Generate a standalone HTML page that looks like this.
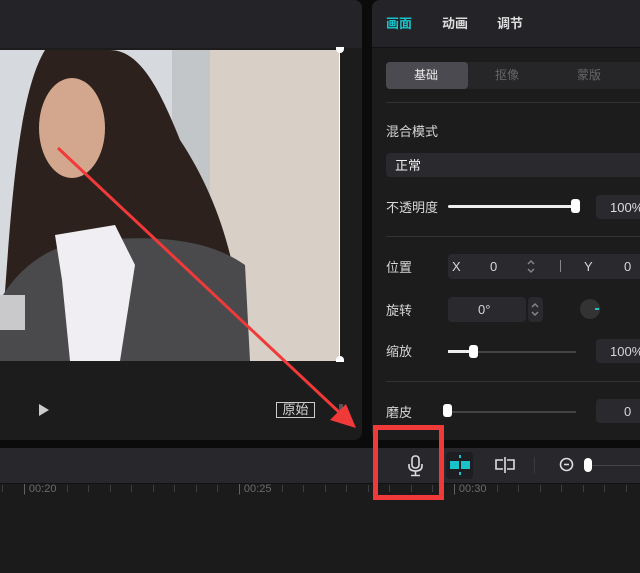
<!DOCTYPE html>
<html><head><meta charset="utf-8"><style>
*{margin:0;padding:0;box-sizing:border-box}
body{width:640px;height:573px;background:#0b0b0c;position:relative;overflow:hidden;font-family:"Liberation Sans","Noto Sans CJK SC",sans-serif;color:#ddd;line-height:1}
.abs{position:absolute}
.lp{left:-10px;top:0;width:372px;height:440px;background:#1c1c1d;border-radius:8px;overflow:hidden}
.rp{left:372px;top:0;width:280px;height:440px;background:#1c1c1d;border-radius:8px;overflow:hidden}
.t{font-size:13px;color:#d6d6d6;line-height:1}
.box{background:#2a2a2e;border-radius:4px}
.line{height:1px;background:#333}
.tick{position:absolute;top:485px;width:1px;height:7px;background:#3e3e42}
.lab{position:absolute;top:484px;font-size:11px;color:#6a6a6e}
</style></head><body>
<div class="abs lp">
  <div class="abs" style="left:0;top:0;width:372px;height:48px;background:#232328"></div>
</div>
<svg class="abs" style="left:0;top:50px" width="340" height="311" viewBox="0 0 340 311">
  <rect width="340" height="311" fill="#d8d4d0"/>
  <rect x="0" y="0" width="175" height="311" fill="#d6d9de"/>
  <rect x="172" y="0" width="38" height="190" fill="#c3c6c9"/>
  <rect x="210" y="0" width="130" height="311" fill="#d8cfc6"/>
  <path d="M45 0 C15 50 10 180 0 311 L240 311 C245 230 220 150 180 90 C160 40 140 0 110 0Z" fill="#2c211d"/>
  <path d="M0 250 C20 215 55 190 100 190 C160 185 210 190 245 215 L250 311 L0 311Z" fill="#4a494c"/>
  <path d="M55 185 L115 175 L135 215 L120 311 L70 311 L62 230Z" fill="#f0eef2"/>
  <ellipse cx="72" cy="78" rx="33" ry="50" fill="#d3a68e"/>
  <path d="M55 15 C95 5 120 50 118 100 L100 35Z" fill="#2c211d"/>
  <rect x="0" y="245" width="25" height="35" fill="#c9c9cc"/>
</svg>
<div class="abs" style="left:336px;top:47px;width:8px;height:6px;background:#fff;border-radius:0 0 4px 4px"></div>
<div class="abs" style="left:336px;top:356px;width:8px;height:6px;background:#fff;border-radius:4px 4px 0 0"></div>
<div class="abs" style="left:339px;top:50px;width:1px;height:311px;background:#fff"></div>
<svg class="abs" style="left:38px;top:403px" width="12" height="14"><path d="M1 1 L11 7 L1 13Z" fill="#ccc"/></svg>
<div class="abs t" style="left:276px;top:402px;width:39px;height:16px;border:1px solid #ccc;font-size:13px;line-height:14px;text-align:center">原始</div>
<div class="abs" style="left:339px;top:404px;width:4px;height:6px;background:#555"></div>

<div class="abs rp">
  <div class="abs" style="left:0;top:0;width:280px;height:48px;background:#232328;border-bottom:1px solid #111"></div>
  <div class="abs" style="left:14px;top:17px;font-size:13px;color:#19c1c8;font-weight:bold">画面</div>
  <div class="abs" style="left:70px;top:17px;font-size:13px;color:#ddd;font-weight:bold">动画</div>
  <div class="abs" style="left:125px;top:17px;font-size:13px;color:#ddd;font-weight:bold">调节</div>
  <div class="abs box" style="left:14px;top:62px;width:270px;height:27px;background:#262629"></div>
  <div class="abs" style="left:14px;top:62px;width:82px;height:27px;background:#4a4a50;border-radius:4px"></div>
  <div class="abs" style="left:42px;top:69px;font-size:12px;color:#eee">基础</div>
  <div class="abs" style="left:123px;top:69px;font-size:12px;color:#666">抠像</div>
  <div class="abs" style="left:205px;top:69px;font-size:12px;color:#666">蒙版</div>
  <div class="abs line" style="left:14px;top:102px;width:270px"></div>
  <div class="abs t" style="left:14px;top:125px">混合模式</div>
  <div class="abs box" style="left:14px;top:153px;width:270px;height:24px"></div>
  <div class="abs t" style="left:23px;top:159px;color:#eee">正常</div>
  <div class="abs t" style="left:14px;top:201px">不透明度</div>
  <div class="abs" style="left:76px;top:205px;width:128px;height:3px;background:#eee;border-radius:2px"></div>
  <div class="abs" style="left:199px;top:199px;width:9px;height:14px;background:#fff;border-radius:3px"></div>
  <div class="abs box" style="left:224px;top:195px;width:60px;height:24px"></div>
  <div class="abs t" style="left:238px;top:201px;color:#ddd">100%</div>
  <div class="abs line" style="left:14px;top:236px;width:270px"></div>
  <div class="abs t" style="left:14px;top:261px">位置</div>
  <div class="abs box" style="left:76px;top:254px;width:208px;height:25px"></div>
  <div class="abs t" style="left:80px;top:260px">X</div>
  <div class="abs t" style="left:118px;top:260px">0</div>
  <svg class="abs" style="left:154px;top:259px" width="10" height="15"><path d="M2 5 L5 2 L8 5 M2 10 L5 13 L8 10" fill="none" stroke="#888" stroke-width="1.4"/></svg>
  <div class="abs" style="left:188px;top:260px;width:1px;height:12px;background:#888"></div>
  <div class="abs t" style="left:212px;top:260px">Y</div>
  <div class="abs t" style="left:252px;top:260px">0</div>
  <div class="abs t" style="left:14px;top:304px">旋转</div>
  <div class="abs box" style="left:76px;top:297px;width:78px;height:25px"></div>
  <div class="abs t" style="left:106px;top:303px">0°</div>
  <div class="abs box" style="left:156px;top:297px;width:15px;height:25px"></div>
  <svg class="abs" style="left:158px;top:302px" width="10" height="15"><path d="M2 5 L5 2 L8 5 M2 10 L5 13 L8 10" fill="none" stroke="#888" stroke-width="1.4"/></svg>
  <div class="abs" style="left:208px;top:299px;width:20px;height:20px;border-radius:50%;background:#333"></div>
  <div class="abs" style="left:223px;top:308px;width:4px;height:2px;background:#19c1c8"></div>
  <div class="abs t" style="left:14px;top:345px">缩放</div>
  <div class="abs" style="left:76px;top:351px;width:128px;height:2px;background:#444"></div>
  <div class="abs" style="left:76px;top:350px;width:26px;height:3px;background:#eee"></div>
  <div class="abs" style="left:97px;top:345px;width:9px;height:13px;background:#fff;border-radius:3px"></div>
  <div class="abs box" style="left:224px;top:339px;width:60px;height:24px"></div>
  <div class="abs t" style="left:238px;top:345px">100%</div>
  <div class="abs line" style="left:14px;top:381px;width:270px"></div>
  <div class="abs t" style="left:14px;top:406px">磨皮</div>
  <div class="abs" style="left:76px;top:411px;width:128px;height:2px;background:#444"></div>
  <div class="abs" style="left:71px;top:404px;width:9px;height:13px;background:#fff;border-radius:3px"></div>
  <div class="abs box" style="left:224px;top:399px;width:60px;height:24px"></div>
  <div class="abs t" style="left:252px;top:405px">0</div>
</div>

<div class="abs" style="left:0;top:448px;width:640px;height:35px;background:#27272c"></div>
<div class="abs" style="left:0;top:483px;width:640px;height:90px;background:#1b1b1c"></div>
<svg class="abs" style="left:407px;top:455px" width="18" height="22"><rect x="5" y="1" width="7" height="12" rx="3" fill="none" stroke="#ddd" stroke-width="1.6"/><path d="M2 9 V11 Q2 16 8.5 16 Q15 16 15 11 V9 M8.5 16 V20 M4 20.5 H13" fill="none" stroke="#ddd" stroke-width="1.6"/></svg>
<div class="abs" style="left:446px;top:452px;width:27px;height:27px;background:#1e1e22;border-radius:4px"></div>
<div class="abs" style="left:450px;top:461px;width:20px;height:8px;background:#19c1c8"></div>
<div class="abs" style="left:459px;top:461px;width:2px;height:8px;background:#1e1e22"></div>
<div class="abs" style="left:459px;top:455px;width:2px;height:3px;background:#19c1c8"></div>
<div class="abs" style="left:459px;top:472px;width:2px;height:3px;background:#19c1c8"></div>
<svg class="abs" style="left:493px;top:456px" width="24" height="18"><path d="M10 4 H3 V13 H10 M14 4 H21 V13 H14 M12 1 V17" fill="none" stroke="#ddd" stroke-width="1.6"/></svg>
<div class="abs" style="left:534px;top:457px;width:1px;height:16px;background:#3a3a3e"></div>
<svg class="abs" style="left:559px;top:457px" width="16" height="16"><circle cx="7.5" cy="7.5" r="6" fill="none" stroke="#ddd" stroke-width="1.6"/><path d="M5 7.5 H10" stroke="#ddd" stroke-width="1.6"/></svg>
<div class="abs" style="left:584px;top:458px;width:8px;height:14px;background:#fff;border-radius:4px"></div>
<div class="abs" style="left:592px;top:465px;width:48px;height:1px;background:#444"></div>

<div class="abs" style="left:0;top:483px;width:640px;height:1px;background:#111"></div>
<div class="abs lab" style="left:23px">|&nbsp;00:20</div>
<div class="abs lab" style="left:238px">|&nbsp;00:25</div>
<div class="abs lab" style="left:453px">|&nbsp;00:30</div>
<div class="tick" style="left:2px"></div><div class="tick" style="left:67px"></div><div class="tick" style="left:88px"></div><div class="tick" style="left:110px"></div><div class="tick" style="left:131px"></div><div class="tick" style="left:153px"></div><div class="tick" style="left:174px"></div><div class="tick" style="left:196px"></div><div class="tick" style="left:217px"></div><div class="tick" style="left:282px"></div><div class="tick" style="left:303px"></div><div class="tick" style="left:325px"></div><div class="tick" style="left:346px"></div><div class="tick" style="left:368px"></div><div class="tick" style="left:389px"></div><div class="tick" style="left:411px"></div><div class="tick" style="left:432px"></div><div class="tick" style="left:497px"></div><div class="tick" style="left:518px"></div><div class="tick" style="left:540px"></div><div class="tick" style="left:561px"></div><div class="tick" style="left:583px"></div><div class="tick" style="left:604px"></div><div class="tick" style="left:626px"></div>

<svg class="abs" style="left:0;top:0" width="640" height="573">
  <line x1="58" y1="148" x2="340" y2="413" stroke="#f03a3a" stroke-width="3"/>
  <path d="M356 428 L330 420 L346 404Z" fill="#f03a3a"/>
  <rect x="375.5" y="427.5" width="66" height="70" fill="none" stroke="#f03a3a" stroke-width="5"/>
</svg>
</body></html>
